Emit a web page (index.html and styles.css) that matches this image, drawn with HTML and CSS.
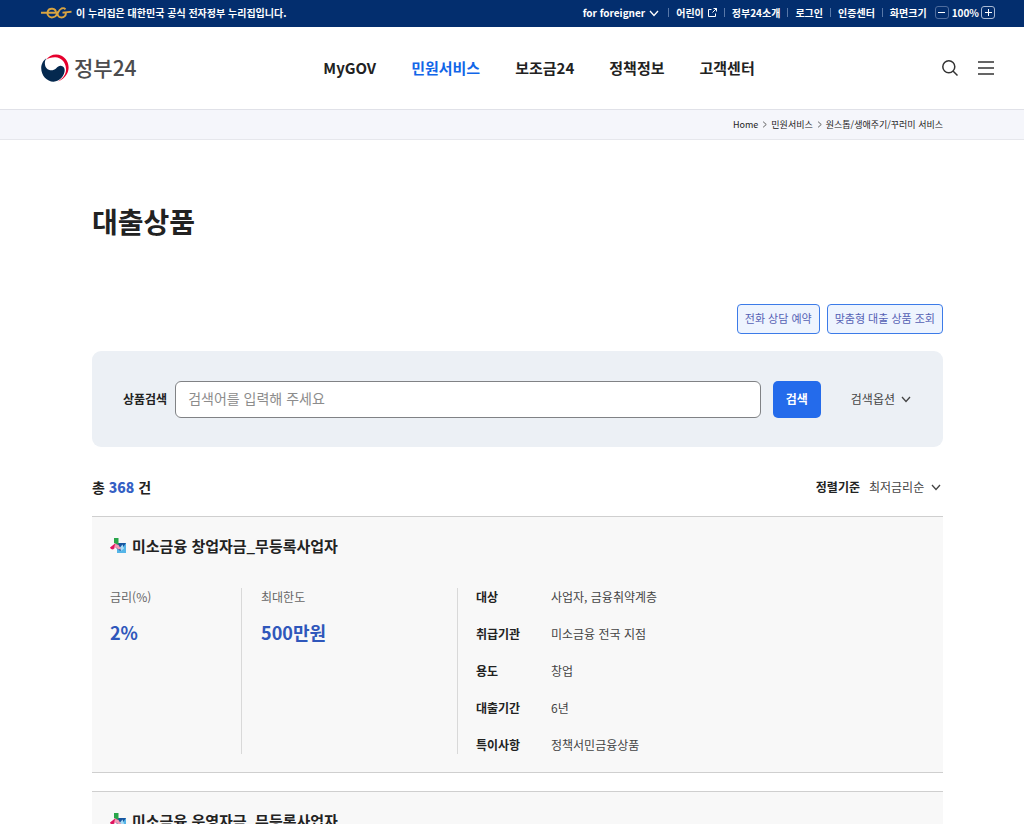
FILE: index.html
```html
<!DOCTYPE html>
<html lang="ko">
<head>
<meta charset="utf-8">
<meta name="viewport" content="width=device-width, initial-scale=1">
<title>대출상품 | 정부24</title>
<link rel="stylesheet" href="styles.css">
</head>
<body>
<svg class="sprite" aria-hidden="true">
  <symbol id="chevron" viewBox="0 0 10 10"><path d="M1 3l4 4.5L9 3" fill="none" stroke="currentColor" stroke-width="1.3"/></symbol>
  <symbol id="miso" viewBox="0 0 16 16">
    <path d="M7 5h9v10H7z" fill="#55b5e8"/>
    <path d="M7 5h9l-5.500 8L6 10z" fill="#17559f"/>
    <path d="M10 9.500l2.500-3 1.500 4-3 2.500z" fill="#a9dcf5"/>
    <path d="M4 0h4.500v7L4 5z" fill="#29a64a"/>
    <path d="M0 9.500L5 5.500 8 7l-5 4.500Q.5 11.500 0 9.500z" fill="#e0125f"/>
    <path d="M5 6l3.500 1 2.500 4-2.500.5L6 9.500l-2 1z" fill="#f29ab5"/>
  </symbol>
</svg>

<div class="topbar">
  <p class="official">
    <svg width="31" height="12" viewBox="0 0 31 12" fill="none" stroke="#d9a441" stroke-width="1.900" aria-hidden="true"><path d="M0 5.700h15c0-5-7-5.200-8.300-1.200C5.300 8.800 9.500 12 14 9.500c3-2 3-6.300 6.500-8 1.500-.6 3-.3 4 .8M30.500 4.700c-3 0-5 .9-9 .9h3.300c.4 3-1.700 4.900-4.300 4.900-3.500 0-4.700-3-3.300-6.200"/></svg>
    이 누리집은 대한민국 공식 전자정부 누리집입니다.
  </p>
  <ul class="utility">
    <li><button class="plain">for foreigner <svg class="chev" width="10" height="10"><use href="#chevron"/></svg></button></li>
    <li><a href="#">어린이 <svg width="9" height="9" viewBox="0 0 9 9" fill="none" stroke="currentColor" aria-hidden="true"><path d="M3.500 1.500h-3v7h7v-3M5.500.5h3v3M8.500.5l-4 4"/></svg></a></li>
    <li><a href="#">정부24소개</a></li>
    <li><a href="#">로그인</a></li>
    <li><a href="#">인증센터</a></li>
    <li class="scale">화면크기
      <button class="step minus" aria-label="축소"><svg width="7" height="7" viewBox="0 0 7 7"><path d="M0 3.500h7" stroke="currentColor"/></svg></button>
      <span>100%</span>
      <button class="step" aria-label="확대"><svg width="7" height="7" viewBox="0 0 7 7"><path d="M0 3.500h7M3.500 0v7" stroke="currentColor"/></svg></button>
    </li>
  </ul>
</div>

<header class="header">
  <a class="logo" href="#">
    <svg width="28" height="28" viewBox="0 0 28 28" aria-hidden="true">
      <path d="M5 6C8 1 15-1 20.500 1.800c7 3.700 9 12.200 5.200 18.500C23.500 24 20.500 26.300 17 27.500c5-3 8.500-7.500 8-13C24.500 8 20 3.500 14.500 3.300 10.500 3.200 7 4.200 5 6z" fill="#e6002d"/>
      <path d="M5.500 4.200C3 7 3.600 12 5.600 14.200 8 17 12.500 17 15 14.500c2-2 3.500-3 5.500-2.500 2.200.5 3.200 2 3.200 4.300C23.700 21 19 27.700 12.500 27.700 6 27.700.2 21.500.2 14 .2 10 2.500 6 5.500 4.200z" fill="#04294f"/>
    </svg>
    <span>정부24</span>
  </a>
  <nav class="gnb">
    <a href="#">MyGOV</a>
    <a href="#" class="on">민원서비스</a>
    <a href="#">보조금24</a>
    <a href="#">정책정보</a>
    <a href="#">고객센터</a>
  </nav>
  <div class="tools">
    <button class="plain" aria-label="검색 열기"><svg width="16" height="16" viewBox="0 0 16 16" fill="none" stroke="#333" stroke-width="1.500"><circle cx="6.800" cy="6.800" r="6"/><path d="M11 11l4.500 4.500"/></svg></button>
    <button class="plain" aria-label="전체 메뉴"><svg width="16" height="16" viewBox="0 0 16 16" fill="none" stroke="#333" stroke-width="1.500"><path d="M0 2h16M0 8h16M0 14h16"/></svg></button>
  </div>
</header>

<nav class="crumbs" aria-label="현재 위치">
  <a href="#">Home</a>
  <svg class="sep" width="7" height="7"><use href="#chevron"/></svg>
  <a href="#">민원서비스</a>
  <svg class="sep" width="7" height="7"><use href="#chevron"/></svg>
  <a href="#">원스톱/생애주기/꾸러미 서비스</a>
</nav>

<main class="main">
  <h1>대출상품</h1>

  <div class="actions">
    <button class="outline">전화 상담 예약</button>
    <button class="outline">맞춤형 대출 상품 조회</button>
  </div>

  <form class="search">
    <label for="keyword">상품검색</label>
    <input id="keyword" type="text" placeholder="검색어를 입력해 주세요">
    <button class="submit" type="button">검색</button>
    <button class="plain option" type="button">검색옵션 <svg width="10" height="10"><use href="#chevron"/></svg></button>
  </form>

  <div class="summary">
    <p class="total">총 <strong>368</strong> 건</p>
    <div class="sort">
      <label for="sort">정렬기준</label>
      <span class="pick">
        <select id="sort"><option>최저금리순</option></select>
        <svg width="10" height="10"><use href="#chevron"/></svg>
      </span>
    </div>
  </div>

  <article class="card">
    <h2><svg width="16" height="16" aria-hidden="true"><use href="#miso"/></svg>미소금융 창업자금_무등록사업자</h2>
    <div class="detail">
      <div class="figure rate"><p>금리(%)</p><strong>2%</strong></div>
      <div class="figure limit"><p>최대한도</p><strong>500만원</strong></div>
      <dl class="facts">
        <dt>대상</dt><dd>사업자, 금융취약계층</dd>
        <dt>취급기관</dt><dd>미소금융 전국 지점</dd>
        <dt>용도</dt><dd>창업</dd>
        <dt>대출기간</dt><dd>6년</dd>
        <dt>특이사항</dt><dd>정책서민금융상품</dd>
      </dl>
    </div>
  </article>

  <article class="card">
    <h2><svg width="16" height="16" aria-hidden="true"><use href="#miso"/></svg>미소금융 운영자금_무등록사업자</h2>
  </article>
</main>
</body>
</html>
```
FILE: styles.css
```css
* {
  box-sizing: border-box;
}

body {
  margin: 0;
  height: 100vh;
  overflow: hidden;
  background: #fff;
  color: #222;
  font: 12px/18px "Noto Sans CJK KR", "Noto Sans", sans-serif;
}

h1, h2, p, ul, dl, dd {
  margin: 0;
  padding: 0;
}

a {
  color: inherit;
  text-decoration: none;
}

button, input, select {
  margin: 0;
  font: inherit;
  color: inherit;
}

svg {
  flex: none;
}

.sprite {
  display: none;
}

.plain {
  display: flex;
  align-items: center;
  padding: 0;
  border: 0;
  background: none;
}

/* top bar */
.topbar {
  display: flex;
  justify-content: space-between;
  align-items: center;
  height: 27px;
  padding: 0 29px 2px 41px;
  background: #032e6e;
  color: #fff;
  font-size: 10px;
  font-weight: 700;
  line-height: 16px;
}

.official {
  display: flex;
  align-items: center;
  gap: 4px;
}

.utility {
  display: flex;
  align-items: center;
  list-style: none;
}

.utility li {
  display: flex;
  align-items: center;
}

.utility li + li::before {
  content: "";
  width: 1px;
  height: 9px;
  margin: 0 7px;
  background: #5878a8;
}

.utility a,
.utility .plain {
  display: flex;
  align-items: center;
  gap: 4px;
}

.utility .plain {
  margin-right: 2px;
}

.step {
  display: flex;
  align-items: center;
  justify-content: center;
  width: 14px;
  height: 13px;
  padding: 0;
  border: 1px solid #a9b9d3;
  border-radius: 3px;
  background: none;
}

.minus {
  margin-left: 8px;
  border-color: #4f6d9e;
}

.step + span {
  margin: 0 2px 0 3px;
}

/* header */
.header {
  display: grid;
  grid-template-columns: 1.18fr auto 1fr;
  align-items: center;
  height: 82px;
  padding: 0 30px 0 41px;
}

.logo {
  display: flex;
  align-items: center;
  gap: 5px;
  color: #4c4c4e;
  font-size: 21px;
  font-weight: 500;
  line-height: 28px;
}

.logo span {
  padding-bottom: 3px;
}

.gnb {
  display: flex;
  gap: 35px;
  font-size: 15px;
  font-weight: 700;
  line-height: 22px;
}

.gnb .on {
  color: #1166e8;
}

.tools {
  display: flex;
  justify-content: flex-end;
  gap: 20px;
}

/* breadcrumb */
.crumbs {
  display: flex;
  justify-content: flex-end;
  align-items: center;
  gap: 3px;
  height: 31px;
  padding-right: 81px;
  border-top: 1px solid #e0e1e8;
  border-bottom: 1px solid #e6e7ec;
  background: #f5f6fb;
  font-size: 9px;
}

.sep {
  color: #555;
  transform: rotate(-90deg);
}

/* content */
.main {
  padding: 60px 81px 0 92px;
}

h1 {
  font-size: 28px;
  font-weight: 700;
  line-height: 42px;
}

.actions {
  display: flex;
  justify-content: flex-end;
  gap: 7px;
  margin-top: 62px;
}

.outline {
  height: 30px;
  padding: 0 7px 2px;
  border: 1px solid #3c7be8;
  border-radius: 4px;
  background: #eef4fe;
  color: #5561b4;
  font-size: 11px;
}

.search {
  display: flex;
  align-items: center;
  margin-top: 17px;
  padding: 30px 32px 29px 31px;
  border-radius: 9px;
  background: #ecf0f5;
}

.search label,
.option {
  padding-bottom: 2px;
}

.search label {
  font-weight: 700;
}

.search input {
  flex: 1;
  min-width: 0;
  height: 37px;
  margin: 0 12px 0 8px;
  padding: 0 12px 3px;
  border: 1px solid #808285;
  border-radius: 6px;
  background: #fff;
  font-size: 14px;
}

.search input::placeholder {
  color: #8c8c8c;
}

.submit {
  width: 48px;
  height: 37px;
  padding: 0 0 1px;
  border: 0;
  border-radius: 5px;
  background: #246beb;
  color: #fff;
  font-weight: 700;
}

.option {
  gap: 6px;
  margin-left: 30px;
  color: #444;
}

.summary {
  display: flex;
  justify-content: space-between;
  align-items: center;
  margin: 29px 0 18px;
}

.total {
  font-size: 14px;
  font-weight: 700;
  line-height: 22px;
}

.total strong {
  color: #3560c4;
}

.sort,
.pick {
  display: flex;
  align-items: center;
}

.sort {
  gap: 9px;
}

.sort label {
  font-weight: 700;
}

.pick {
  gap: 6px;
  padding-right: 2px;
  color: #444;
}

.sort select {
  padding: 0;
  border: 0;
  background: none;
  appearance: none;
}

.card {
  margin-bottom: 18px;
  padding: 18px;
  border-top: 1px solid #cfcfcf;
  border-bottom: 1px solid #cfcfcf;
  background: #f8f8f8;
}

.card h2 {
  display: flex;
  align-items: center;
  gap: 6px;
  font-size: 15px;
  font-weight: 700;
  line-height: 22px;
}

.detail {
  display: flex;
  margin-top: 31px;
}

.figure {
  border-right: 1px solid #d9d9d9;
}

.rate {
  flex: 0 0 16.2%;
}

.limit {
  flex: 0 0 26.5%;
  padding-left: 19px;
}

.figure p {
  color: #666;
}

.figure strong {
  display: block;
  margin-top: 13px;
  color: #2f57bb;
  font-size: 18px;
  font-weight: 700;
  line-height: 26px;
}

.facts {
  display: grid;
  grid-template-columns: 75px auto;
  row-gap: 19px;
  padding-left: 18px;
}

.facts dt {
  font-weight: 700;
}

.facts dd {
  color: #444;
}
```
